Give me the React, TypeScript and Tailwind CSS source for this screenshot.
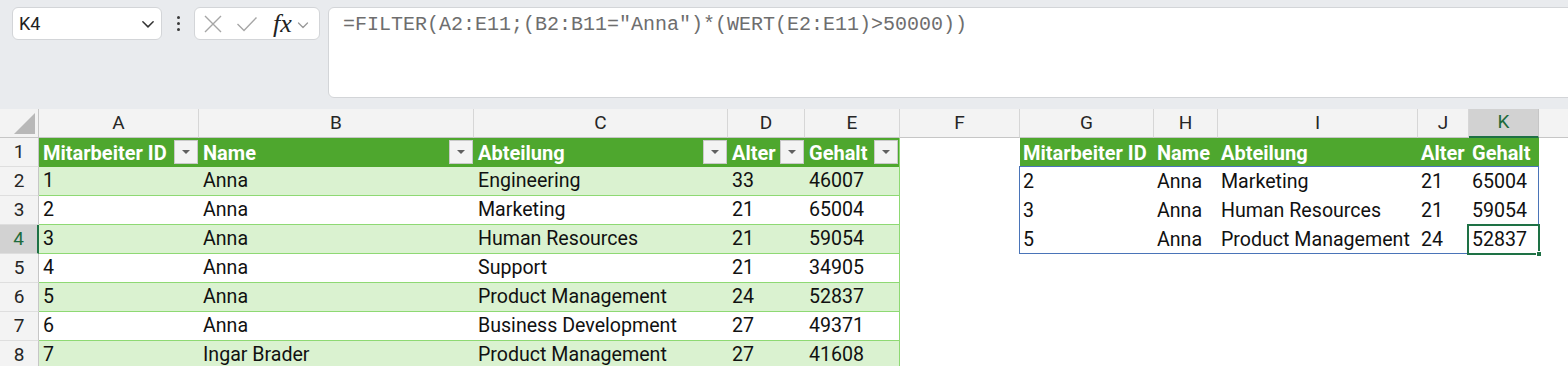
import React from "react";

const FONT = { fontFamily: "Roboto, 'Noto Sans', sans-serif" };

const COLW = [
  "w-[160px]",
  "w-[275px]",
  "w-[254px]",
  "w-[77px]",
  "w-[95px]",
  "w-[120px]",
  "w-[134px]",
  "w-[64px]",
  "w-[200px]",
  "w-[51px]",
  "w-[70px]",
];
const LETTERS = ["A", "B", "C", "D", "E", "F", "G", "H", "I", "J", "K"];

const table1 = [
  ["1", "Anna", "Engineering", "33", "46007"],
  ["2", "Anna", "Marketing", "21", "65004"],
  ["3", "Anna", "Human Resources", "21", "59054"],
  ["4", "Anna", "Support", "21", "34905"],
  ["5", "Anna", "Product Management", "24", "52837"],
  ["6", "Anna", "Business Development", "27", "49371"],
  ["7", "Ingar Brader", "Product Management", "27", "41608"],
];
const spill = [
  ["2", "Anna", "Marketing", "21", "65004"],
  ["3", "Anna", "Human Resources", "21", "59054"],
  ["5", "Anna", "Product Management", "24", "52837"],
];
const headers = ["Mitarbeiter ID", "Name", "Abteilung", "Alter", "Gehalt"];

function Chevron({ color = "#333", size = 14 }: { color?: string; size?: number }) {
  return (
    <svg width={size} height={size} viewBox="0 0 14 14" fill="none">
      <path d="M2.5 5 L7 9.5 L11.5 5" stroke={color} strokeWidth="1.3" strokeLinecap="round" strokeLinejoin="round" />
    </svg>
  );
}

function Dropdown() {
  return (
    <div className="absolute right-[1px] top-[2px] w-[24px] h-[24px] bg-[#f3f3f3] border border-[#c9c9c9] flex items-center justify-center">
      <svg width="10" height="6" viewBox="0 0 10 6">
        <path d="M1 1 L9 1 L5 5 Z" fill="#606060" />
      </svg>
    </div>
  );
}

function Toolbar() {
  return (
    <div className="h-[109px] bg-[#e9ebee] flex items-start pt-[7px] pl-[12px] overflow-hidden">
      <div className="w-[150px] h-[33px] shrink-0 bg-white border border-[#d3d5d8] rounded-[6px] flex items-center justify-between pl-[6px] pr-[5px]">
        <span className="text-[18px] text-[#222]">K4</span>
        <Chevron color="#333" size={16} />
      </div>
      <div className="w-[32px] h-[33px] shrink-0 flex flex-col items-center justify-center gap-[3px]">
        <div className="w-[3px] h-[3px] rounded-full bg-[#3a3a3a]" />
        <div className="w-[3px] h-[3px] rounded-full bg-[#3a3a3a]" />
        <div className="w-[3px] h-[3px] rounded-full bg-[#3a3a3a]" />
      </div>
      <div className="w-[126px] h-[33px] shrink-0 bg-white border border-[#d3d5d8] rounded-[6px] flex items-center pl-[8px]">
        <svg width="20" height="20" viewBox="0 0 20 20" fill="none">
          <path d="M2 2 L18 18 M18 2 L2 18" stroke="#a6a6a6" strokeWidth="1.4" />
        </svg>
        <svg className="ml-[13px]" width="22" height="18" viewBox="0 0 22 18" fill="none">
          <path d="M1.5 9 L8 15.5 L20.5 2.5" stroke="#a6a6a6" strokeWidth="1.4" />
        </svg>
        <span
          className="ml-[15px] text-[26px] italic text-[#222] leading-none"
          style={{ fontFamily: "'Liberation Serif', 'DejaVu Serif', serif" }}
        >
          fx
        </span>
        <span className="ml-[4px] mt-[2px]">
          <Chevron color="#9a9a9a" size={14} />
        </span>
      </div>
      <div className="ml-[8px] flex-1 h-[91px] -mr-[12px] bg-white border border-[#d3d5d8] rounded-[6px] pl-[14px] pt-[5px]">
        <span
          className="text-[20px] leading-[24px] text-[#6e6e6e] whitespace-pre"
          style={{ fontFamily: "'Liberation Mono', 'DejaVu Sans Mono', monospace" }}
        >
          =FILTER(A2:E11;(B2:B11="Anna")*(WERT(E2:E11)&gt;50000))
        </span>
      </div>
    </div>
  );
}

function ColumnHeaderRow() {
  return (
    <div className="flex h-[29px]">
      <div className="w-[39px] shrink-0 bg-[#f3f3f3] border-r border-b border-[#c6c6c6] relative">
        <svg className="absolute right-[3px] bottom-[3px]" width="21" height="21" viewBox="0 0 21 21">
          <path d="M21 0 L21 21 L0 21 Z" fill="#b8b8b8" />
        </svg>
      </div>
      {LETTERS.map((l, i) => {
        const sel = l === "K";
        return (
          <div
            key={l}
            className={`${COLW[i]} shrink-0 flex items-center justify-center text-[19px] border-r ${
              sel
                ? "bg-[#d2d2d2] text-[#1e6b3c] border-[#c6c6c6] border-b-2 border-b-[#1e7145]"
                : "bg-[#f3f3f3] text-[#262626] border-[#d6d6d6] border-b border-b-[#c6c6c6]"
            }`}
          >
            {l}
          </div>
        );
      })}
      <div className="flex-1 bg-[#f3f3f3] border-b border-[#c6c6c6]" />
    </div>
  );
}

function RowHeader({ n }: { n: number }) {
  const sel = n === 4;
  return (
    <div
      className={`w-[39px] shrink-0 flex items-center justify-center text-[19px] border-b border-b-[#dedede] ${
        sel
          ? "bg-[#d2d2d2] text-[#1e6b3c] border-r-2 border-r-[#1e7145]"
          : "bg-[#f3f3f3] text-[#262626] border-r border-r-[#c6c6c6]"
      }`}
    >
      {n}
    </div>
  );
}

function SheetRow({ n }: { n: number }) {
  const isHeader = n === 1;
  const t1 = isHeader ? headers : table1[n - 2];
  const band = !isHeader && n % 2 === 0;
  const t1bg = isHeader ? "bg-[#4ea72e]" : band ? "bg-[#daf2d0]" : "bg-white";
  const sp = n === 1 ? headers : n >= 2 && n <= 4 ? spill[n - 2] : null;
  return (
    <div className="flex h-[29px]">
      <RowHeader n={n} />
      {t1 &&
        t1.map((v, i) => (
          <div
            key={i}
            className={`${COLW[i]} shrink-0 relative flex items-center pl-[4px] whitespace-nowrap ${t1bg} ${
              isHeader ? "font-bold text-white text-[20px]" : "text-[#111] text-[19.6px] border-b border-[#8ed973]"
            } ${i === 4 ? "border-r border-r-[#8ed973]" : ""}`}
          >
            {v}
            {isHeader && <Dropdown />}
          </div>
        ))}
      <div className="w-[120px] shrink-0 bg-white" />
      {[0, 1, 2, 3, 4].map((i) => (
        <div
          key={i}
          className={`${COLW[i + 6]} shrink-0 flex items-center pl-[3px] whitespace-nowrap ${
            sp
              ? isHeader
                ? "bg-[#4ea72e] font-bold text-white text-[20px]"
                : "bg-white text-[#111] text-[19.6px]"
              : "bg-white"
          }`}
        >
          {sp ? sp[i] : ""}
        </div>
      ))}
      <div className="flex-1 bg-white" />
    </div>
  );
}

export default function App() {
  return (
    <div className="w-[1568px] h-[366px] overflow-hidden bg-white" style={FONT}>
      <Toolbar />
      <div className="relative">
        <ColumnHeaderRow />
        {[1, 2, 3, 4, 5, 6, 7, 8].map((n) => (
          <SheetRow key={n} n={n} />
        ))}
        {/* spill range border */}
        <div className="absolute left-[1019px] top-[57px] w-[520px] h-[88px] border border-[#4a74b8] pointer-events-none" />
        {/* selected cell K4 */}
        <div className="absolute left-[1467px] top-[115px] w-[73px] h-[31px] border-2 border-[#1e7145] pointer-events-none">
          <div className="absolute -right-[4px] -bottom-[4px] w-[6px] h-[6px] bg-[#1e7145] border border-white" />
        </div>
      </div>
    </div>
  );
}
